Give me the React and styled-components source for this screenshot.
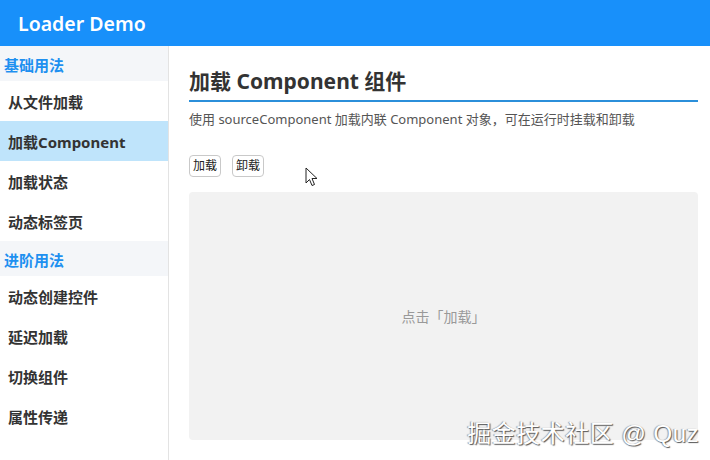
import React, { useState } from "react";
import styled, { createGlobalStyle } from "styled-components";

const GlobalStyle = createGlobalStyle`
  html, body {
    margin: 0;
    padding: 0;
    background: #fff;
    font-family: "Noto Sans", "Noto Sans CJK SC", sans-serif;
  }
`;

const Page = styled.div`
  position: relative;
  display: flex;
  flex-direction: column;
  width: 710px;
  height: 460px;
  overflow: hidden;
`;

const Header = styled.div`
  height: 46px;
  flex: none;
  display: flex;
  align-items: center;
  padding-left: 18px;
  background: #1890fa;
  color: #fff;
  font-size: 19.5px;
  font-weight: 600;
`;

const Body = styled.div`
  flex: 1;
  display: flex;
  min-height: 0;
`;

const Sidebar = styled.div`
  width: 168px;
  flex: none;
  border-right: 1px solid #e3e3e3;
  display: flex;
  flex-direction: column;
`;

const Group = styled.div`
  height: 35px;
  display: flex;
  align-items: center;
  padding: 2px 0 0 4px;
  box-sizing: border-box;
  background: #f4f6f9;
  color: #1e90f0;
  font-size: 15px;
  font-weight: 700;
`;

const Item = styled.div`
  height: 40px;
  display: flex;
  align-items: center;
  padding-left: 8px;
  color: #333;
  font-size: 15px;
  font-weight: 700;
  background: ${(p) => (p.active ? "#bfe4fb" : "transparent")};
  cursor: pointer;
`;

const Main = styled.div`
  flex: 1;
  display: flex;
  flex-direction: column;
  padding: 20px 12px 20px 20px;
`;

const Title = styled.h2`
  margin: 0;
  padding-bottom: 4px;
  border-bottom: 2px solid #2b8fda;
  color: #333;
  font-size: 21px;
  font-weight: 700;
  line-height: 30px;
`;

const Desc = styled.p`
  margin: 7px 0 0;
  color: #555;
  font-size: 13px;
  line-height: 20px;
`;

const Toolbar = styled.div`
  display: flex;
  gap: 11px;
  margin-top: 26px;
`;

const Button = styled.button`
  height: 22px;
  padding: 0 3px;
  border: 1px solid #c9c9c9;
  border-radius: 4px;
  background: #fff;
  color: #222;
  font-family: inherit;
  font-size: 12px;
  line-height: 20px;
  cursor: pointer;
`;

const Stage = styled.div`
  flex: 1;
  margin-top: 15px;
  background: #f2f2f2;
  border-radius: 4px;
  display: flex;
  align-items: center;
  justify-content: center;
  color: #999;
  font-size: 14px;
`;

const Watermark = styled.div`
  position: absolute;
  right: 11px;
  bottom: 11px;
  color: #fff;
  font-size: 24px;
  font-family: "Liberation Sans", "Noto Sans CJK SC", sans-serif;
  text-shadow: 1px 1px 1px #555, -1px 0 1px #999;
  letter-spacing: 0.5px;
`;

const Cursor = styled.svg`
  position: absolute;
  left: 305px;
  top: 167px;
`;

const menu = [
  { group: "基础用法" },
  { label: "从文件加载" },
  { label: "加载Component" },
  { label: "加载状态" },
  { label: "动态标签页" },
  { group: "进阶用法" },
  { label: "动态创建控件" },
  { label: "延迟加载" },
  { label: "切换组件" },
  { label: "属性传递" },
];

export default function App() {
  const [active, setActive] = useState("加载Component");
  const [loaded, setLoaded] = useState(false);

  return (
    <Page>
      <GlobalStyle />
      <Header>Loader Demo</Header>
      <Body>
        <Sidebar>
          {menu.map((m) =>
            m.group ? (
              <Group key={m.group}>{m.group}</Group>
            ) : (
              <Item key={m.label} active={active === m.label} onClick={() => setActive(m.label)}>
                {m.label}
              </Item>
            )
          )}
        </Sidebar>
        <Main>
          <Title>加载 Component 组件</Title>
          <Desc>使用 sourceComponent 加载内联 Component 对象，可在运行时挂载和卸载</Desc>
          <Toolbar>
            <Button onClick={() => setLoaded(true)}>加载</Button>
            <Button onClick={() => setLoaded(false)}>卸载</Button>
          </Toolbar>
          <Stage>{loaded ? "Component 已加载" : "点击「加载」"}</Stage>
        </Main>
      </Body>
      <Cursor width="14" height="20" viewBox="0 0 14 20">
        <path d="M1 1 L1 16 L4.5 12.5 L7 18.5 L9.5 17.5 L7 11.5 L12 11.5 Z" fill="#fff" stroke="#222" strokeWidth="1" strokeLinejoin="round" />
      </Cursor>
      <Watermark>掘金技术社区 @ Quz</Watermark>
    </Page>
  );
}
